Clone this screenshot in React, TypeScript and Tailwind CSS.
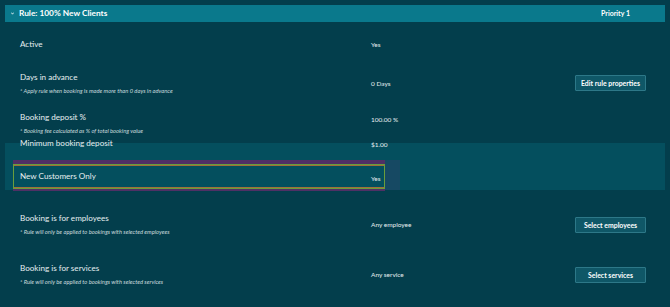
import React from "react";

const font = { fontFamily: "Lato, 'Open Sans', sans-serif" };

function Label({ title, note }: { title: string; note?: string }) {
  return (
    <div className="w-[351px] shrink-0">
      <p className="text-[8.1px] leading-[11px] text-[#e6eef0]">{title}</p>
      {note && <p className="mt-[4px] text-[5.8px] leading-[7px] italic text-[#c9dadd]">{note}</p>}
    </div>
  );
}

function Value({ children }: { children: React.ReactNode }) {
  return <p className="w-[204px] shrink-0 text-[6.5px] leading-[9px] text-[#e6eef0]">{children}</p>;
}

function Button({ children }: { children: React.ReactNode }) {
  return (
    <button className="block w-[71px] h-[16px] rounded-[1px] border border-[#2d7888] bg-[#0f5767] text-[6.9px] leading-[14px] font-bold text-white">
      {children}
    </button>
  );
}

export default function App() {
  return (
    <div className="w-[670px] h-[307px] overflow-hidden bg-[#033e4c] px-[5px] pt-[5px]" style={font}>
      {/* Header */}
      <div className="h-[17px] bg-[#0a798c] flex items-center justify-between pl-[6px] pr-[35px]">
        <div className="flex items-center gap-[5px]">
          <svg width="3" height="3" viewBox="0 0 3 3" className="mt-[-1px]">
            <path d="M0.3 0.6 L1.5 2.2 L2.7 0.6" fill="none" stroke="#ffffff" strokeWidth="0.8" />
          </svg>
          <span className="text-[8.3px] font-bold text-white">Rule: 100% New Clients</span>
        </div>
        <span className="text-[7px] font-bold text-white">Priority 1</span>
      </div>

      {/* Active */}
      <div className="h-[45px] flex items-start pl-[15px]">
        <div className="pt-[17px]"><Label title="Active" /></div>
        <div className="pt-[18px]"><Value>Yes</Value></div>
      </div>

      {/* Days in advance */}
      <div className="h-[32px] flex items-start pl-[15px]">
        <div className="pt-[5px]">
          <Label title="Days in advance" note="* Apply rule when booking is made more than 0 days in advance" />
        </div>
        <div className="pt-[12px]"><Value>0 Days</Value></div>
        <div className="pt-[8px]"><Button>Edit rule properties</Button></div>
      </div>

      {/* Booking deposit */}
      <div className="h-[38px] flex items-start pl-[15px]">
        <div className="pt-[13px]">
          <Label title="Booking deposit %" note="* Booking fee calculated as % of total booking value" />
        </div>
        <div className="pt-[16px]"><Value>100.00 %</Value></div>
      </div>

      {/* Minimum booking deposit */}
      <div className="h-[12px] flex items-start pl-[15px] bg-[linear-gradient(to_bottom,#033e4c_6px,#044f5e_6px)]">
        <div className="pt-[1px]"><Label title="Minimum booking deposit" /></div>
        <div className="pt-[3px]"><Value>$1.00</Value></div>
      </div>

      {/* Highlighted panel */}
      <div className="h-[41px] bg-[#044f5e] pt-[11px] pl-[8px] flex">
        <div className="w-[372px] h-[31px] bg-[#4f3065] pt-[4px]">
          <div className="h-[25px] border border-[#6a9d3c]">
            <div className="h-full border-y border-[#a0703a] bg-[#044f5e] flex items-center pl-[6px]">
              <p className="w-[351px] shrink-0 text-[8.1px] leading-[11px] text-[#e6eef0]">New Customers Only</p>
              <p className="text-[6.5px] leading-[9px] text-[#e6eef0] mt-[4px]">Yes</p>
            </div>
          </div>
        </div>
        <div className="w-[15px] h-[30px] bg-[#164963]" />
      </div>

      {/* Employees */}
      <div className="h-[60px] flex items-start pl-[15px]">
        <div className="pt-[23px]">
          <Label title="Booking is for employees" note="* Rule will only be applied to bookings with selected employees" />
        </div>
        <div className="pt-[30px]"><Value>Any employee</Value></div>
        <div className="pt-[27px]"><Button>Select employees</Button></div>
      </div>

      {/* Services */}
      <div className="h-[57px] flex items-start pl-[15px]">
        <div className="pt-[13px]">
          <Label title="Booking is for services" note="* Rule will only be applied to bookings with selected services" />
        </div>
        <div className="pt-[20px]"><Value>Any service</Value></div>
        <div className="pt-[17px]"><Button>Select services</Button></div>
      </div>
    </div>
  );
}
